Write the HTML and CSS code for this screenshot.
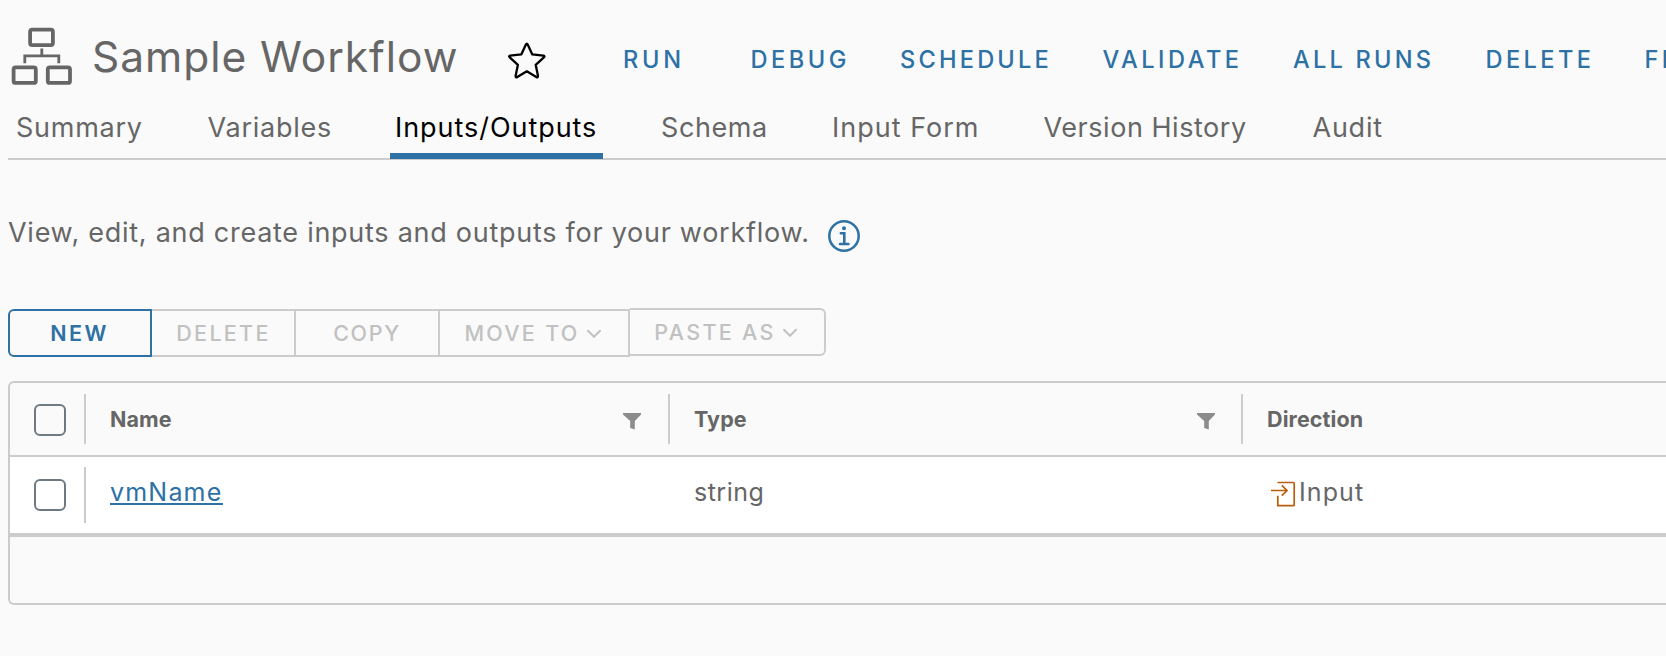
FILE: index.html
```html
<!DOCTYPE html>
<html lang="en">
<head>
<meta charset="utf-8">
<title>Sample Workflow</title>
<link rel="stylesheet" href="styles.css">
</head>
<body>
<header class="header">
  <svg class="workflow-icon" width="62" height="60" viewBox="0 0 62 60" fill="none" stroke="#666">
    <g stroke-width="3.8">
      <rect x="19.1" y="3.6" width="22.8" height="15.5" rx="2"/>
      <rect x="2.6" y="41.3" width="22.2" height="15.6" rx="2"/>
      <rect x="36.8" y="41.3" width="22.2" height="15.6" rx="2"/>
    </g>
    <path stroke-width="2.8" d="M30.8 22.4V29.9M13.8 37.3V29.900H47.800V37.300"/>
  </svg>
  <h1 class="title">Sample Workflow</h1>
  <svg class="star" width="40" height="40" viewBox="0 0 40 40" fill="none" stroke="#000" stroke-width="2.3" stroke-linejoin="round">
    <path d="M18.9 4.6Q19.8 2.8 20.7 4.6L25.3 14.4L36.4 15.6Q38.2 16 36.9 17.3L28.7 24.8L31 36Q31 37.8 29.3 37.1L19.8 31.3L10.3 37.1Q8.6 37.8 8.6 36L10.900 24.8L2.7 17.3Q1.4 16 3.2 15.6L14.3 14.4Z"/>
  </svg>
  <nav class="actions">
    <a class="run">RUN</a><a class="debug">DEBUG</a><a class="schedule">SCHEDULE</a><a class="validate">VALIDATE</a><a class="all-runs">ALL RUNS</a><a class="delete">DELETE</a><a class="find">FIND</a>
  </nav>
</header>
<nav class="tabs">
  <a>Summary</a><a>Variables</a><a class="active">Inputs/Outputs</a><a class="schema">Schema</a><a class="form">Input Form</a><a class="history">Version History</a><a>Audit</a>
</nav>
<main class="content">
  <div class="description">
    <p>View, edit, and create inputs and outputs for your workflow.</p>
    <svg class="info" width="32" height="32" viewBox="0 0 32 32" fill="none" stroke="#2d71a5">
      <circle cx="16" cy="16" r="14.7" stroke-width="2.5"/>
      <circle cx="16" cy="8.2" r="2" fill="#2d71a5" stroke="none"/>
      <path stroke-width="2.6" stroke-linecap="round" d="M12.800 13.300H16.300V23.900M12 24H20.400"/>
    </svg>
  </div>
  <div class="toolbar">
    <button class="btn primary">NEW</button><button class="btn remove">DELETE</button><button class="btn copy">COPY</button><button class="btn move">MOVE TO<svg width="16" height="10" viewBox="0 0 16 10"><path d="M2 1.800L8 7.800L14 1.800"/></svg></button><button class="btn paste">PASTE AS<svg width="16" height="10" viewBox="0 0 16 10"><path d="M2 1.800L8 7.800L14 1.800"/></svg></button>
  </div>
  <section class="grid">
    <div class="row head">
      <div class="cell check"><span class="box"></span></div>
      <div class="cell name">Name<svg class="filter" width="18" height="17" viewBox="0 0 18 17"><path d="M0 0H18V1.500L11.800 8V16.600L7.200 15V8L0 1.500Z"/></svg></div>
      <div class="cell type">Type<svg class="filter" width="18" height="17" viewBox="0 0 18 17"><path d="M0 0H18V1.500L11.800 8V16.600L7.200 15V8L0 1.500Z"/></svg></div>
      <div class="cell direction">Direction</div>
    </div>
    <div class="row item">
      <div class="cell check"><span class="box"></span></div>
      <div class="cell"><a class="link">vmName</a></div>
      <div class="cell string">string</div>
      <div class="cell input"><svg width="25" height="26" viewBox="0 0 25 26" fill="none" stroke="#b95e0b" stroke-width="1.7"><path d="M6.500 1.500H22.200Q23.200 1.500 23.200 2.500V23.700Q23.200 24.700 22.200 24.700H6.800V14.700M0 9.500H16M10.800 4.400L16 9.500L10.800 14.700"/></svg>Input</div>
    </div>
    <div class="foot"></div>
  </section>
</main>
</body>
</html>
```
FILE: styles.css
```css
* { box-sizing: border-box; }

body {
  margin: 0;
  height: 656px;
  overflow: hidden;
  background: #fafafa;
  color: #666;
  font-family: Inter, "Open Sans", sans-serif;
}

/* Header */
.header { display: flex; height: 112px; padding-left: 11px; white-space: nowrap; }
.header > * { flex: none; }
.workflow-icon { margin-top: 26px; }
.title { width: 416px; margin: 0; padding-left: 19px; font-size: 42.5px; font-weight: 400; line-height: 114px; letter-spacing: .95px; }
.star { width: 40px; margin: 40px 0 0 17.5px; }
.actions {
  display: grid;
  grid-template-columns: 127.5px 149.5px 202.5px 190.5px 192.5px 159px 100px;
  margin-left: 76.5px;
  font-size: 23.6px;
  font-weight: 540;
  line-height: 120px;
  color: #2d71a5;
}
.run { letter-spacing: 3.7px; }
.debug { letter-spacing: 3.5px; }
.schedule { letter-spacing: 3.2px; }
.validate { letter-spacing: 3.5px; }
.all-runs { letter-spacing: 3.2px; }
.delete, .find { letter-spacing: 3.4px; }

/* Tabs */
.tabs {
  display: grid;
  grid-template-columns: 191.5px 182.5px 271px 171px 211.5px 269px 100px;
  height: 48px;
  margin-left: 8px;
  padding-left: 8px;
  border-bottom: 2px solid #ccc;
  font-size: 27px;
  line-height: 32px;
  letter-spacing: .75px;
  white-space: nowrap;
}
.tabs .active { position: relative; padding-left: 5px; color: #000; letter-spacing: .95px; }
.tabs .active::after {
  content: "";
  position: absolute;
  left: 0;
  top: 41px;
  width: 213px;
  height: 6px;
  background: #2d71a5;
}
.tabs .schema { letter-spacing: .6px; }
.tabs .form { letter-spacing: 1px; }
.tabs .history { letter-spacing: .54px; }

/* Content */
.content { padding: 52px 0 0 8px; }
.description { display: flex; height: 40px; font-size: 27px; line-height: 42px; }
.description p { width: 820px; margin: 0; letter-spacing: .73px; white-space: nowrap; }
.info { margin-top: 8px; }

.toolbar { display: flex; margin-top: 57px; height: 48px; }
.btn {
  display: flex;
  align-items: center;
  justify-content: center;
  width: 144px;
  height: 48px;
  padding: 0 0 0 1px;
  border: 2px solid #ccc;
  border-left: 0;
  background: none;
  color: #c1c1c1;
  font: 540 21.5px Inter, sans-serif;
  letter-spacing: 2.3px;
}
.btn.primary { padding: 0 1px 0 0; border: 2px solid #2d71a5; border-radius: 6px 0 0 6px; color: #2d71a5; font-weight: 600; letter-spacing: 2.4px; }
.btn.copy { padding: 0; letter-spacing: 1.65px; }
.btn.move { width: 190px; padding: 0 2px 1px 0; }
.btn.paste { width: 196px; margin-top: -1px; padding: 0 2px 1px 0; border-radius: 0 6px 6px 0; }
.btn svg { margin: 2px 0 0 6px; fill: none; stroke: #c1c1c1; stroke-width: 2; stroke-linecap: round; }

/* Data grid */
.grid { margin-top: 24px; border: 2px solid #ccc; border-right: 0; border-radius: 6px 0 0 6px; }
.row { display: grid; grid-template-columns: 76px 584px 573px 1fr; }
.cell { display: flex; white-space: nowrap; }
.head { height: 74px; border-bottom: 2px solid #ccc; font-size: 21.5px; font-weight: 660; letter-spacing: .1px; }
.head .cell { align-items: center; height: 50px; margin: 11px 0; padding-left: 24px; }
.head .cell:not(:last-child) { border-right: 2px solid #ccc; }
.filter { margin: 5px 26px 0 auto; fill: #8c8c8c; }
.name .filter { margin-right: 27px; }
.box { width: 32px; height: 32px; border: 2px solid #6d7a83; border-radius: 6px; }
.head .check { padding-top: 2px; }
.item { height: 76px; background: #fff; font-size: 25px; line-height: 30px; letter-spacing: .5px; }
.item .cell { padding: 20px 0 0 24px; }
.item .check { align-items: center; height: 56px; margin-top: 10px; padding-top: 0; border-right: 2px solid #ccc; }
.link { height: 28px; border-bottom: 2px solid; color: #2d71a5; letter-spacing: 1.2px; }
.item .input { padding-left: 28px; letter-spacing: 1.1px; }
.input svg { flex: none; margin: 4px 3px 0 0; }
.item .input { padding-left: 28px; }
.foot { height: 70px; border-top: 4px solid #ccc; }
```
